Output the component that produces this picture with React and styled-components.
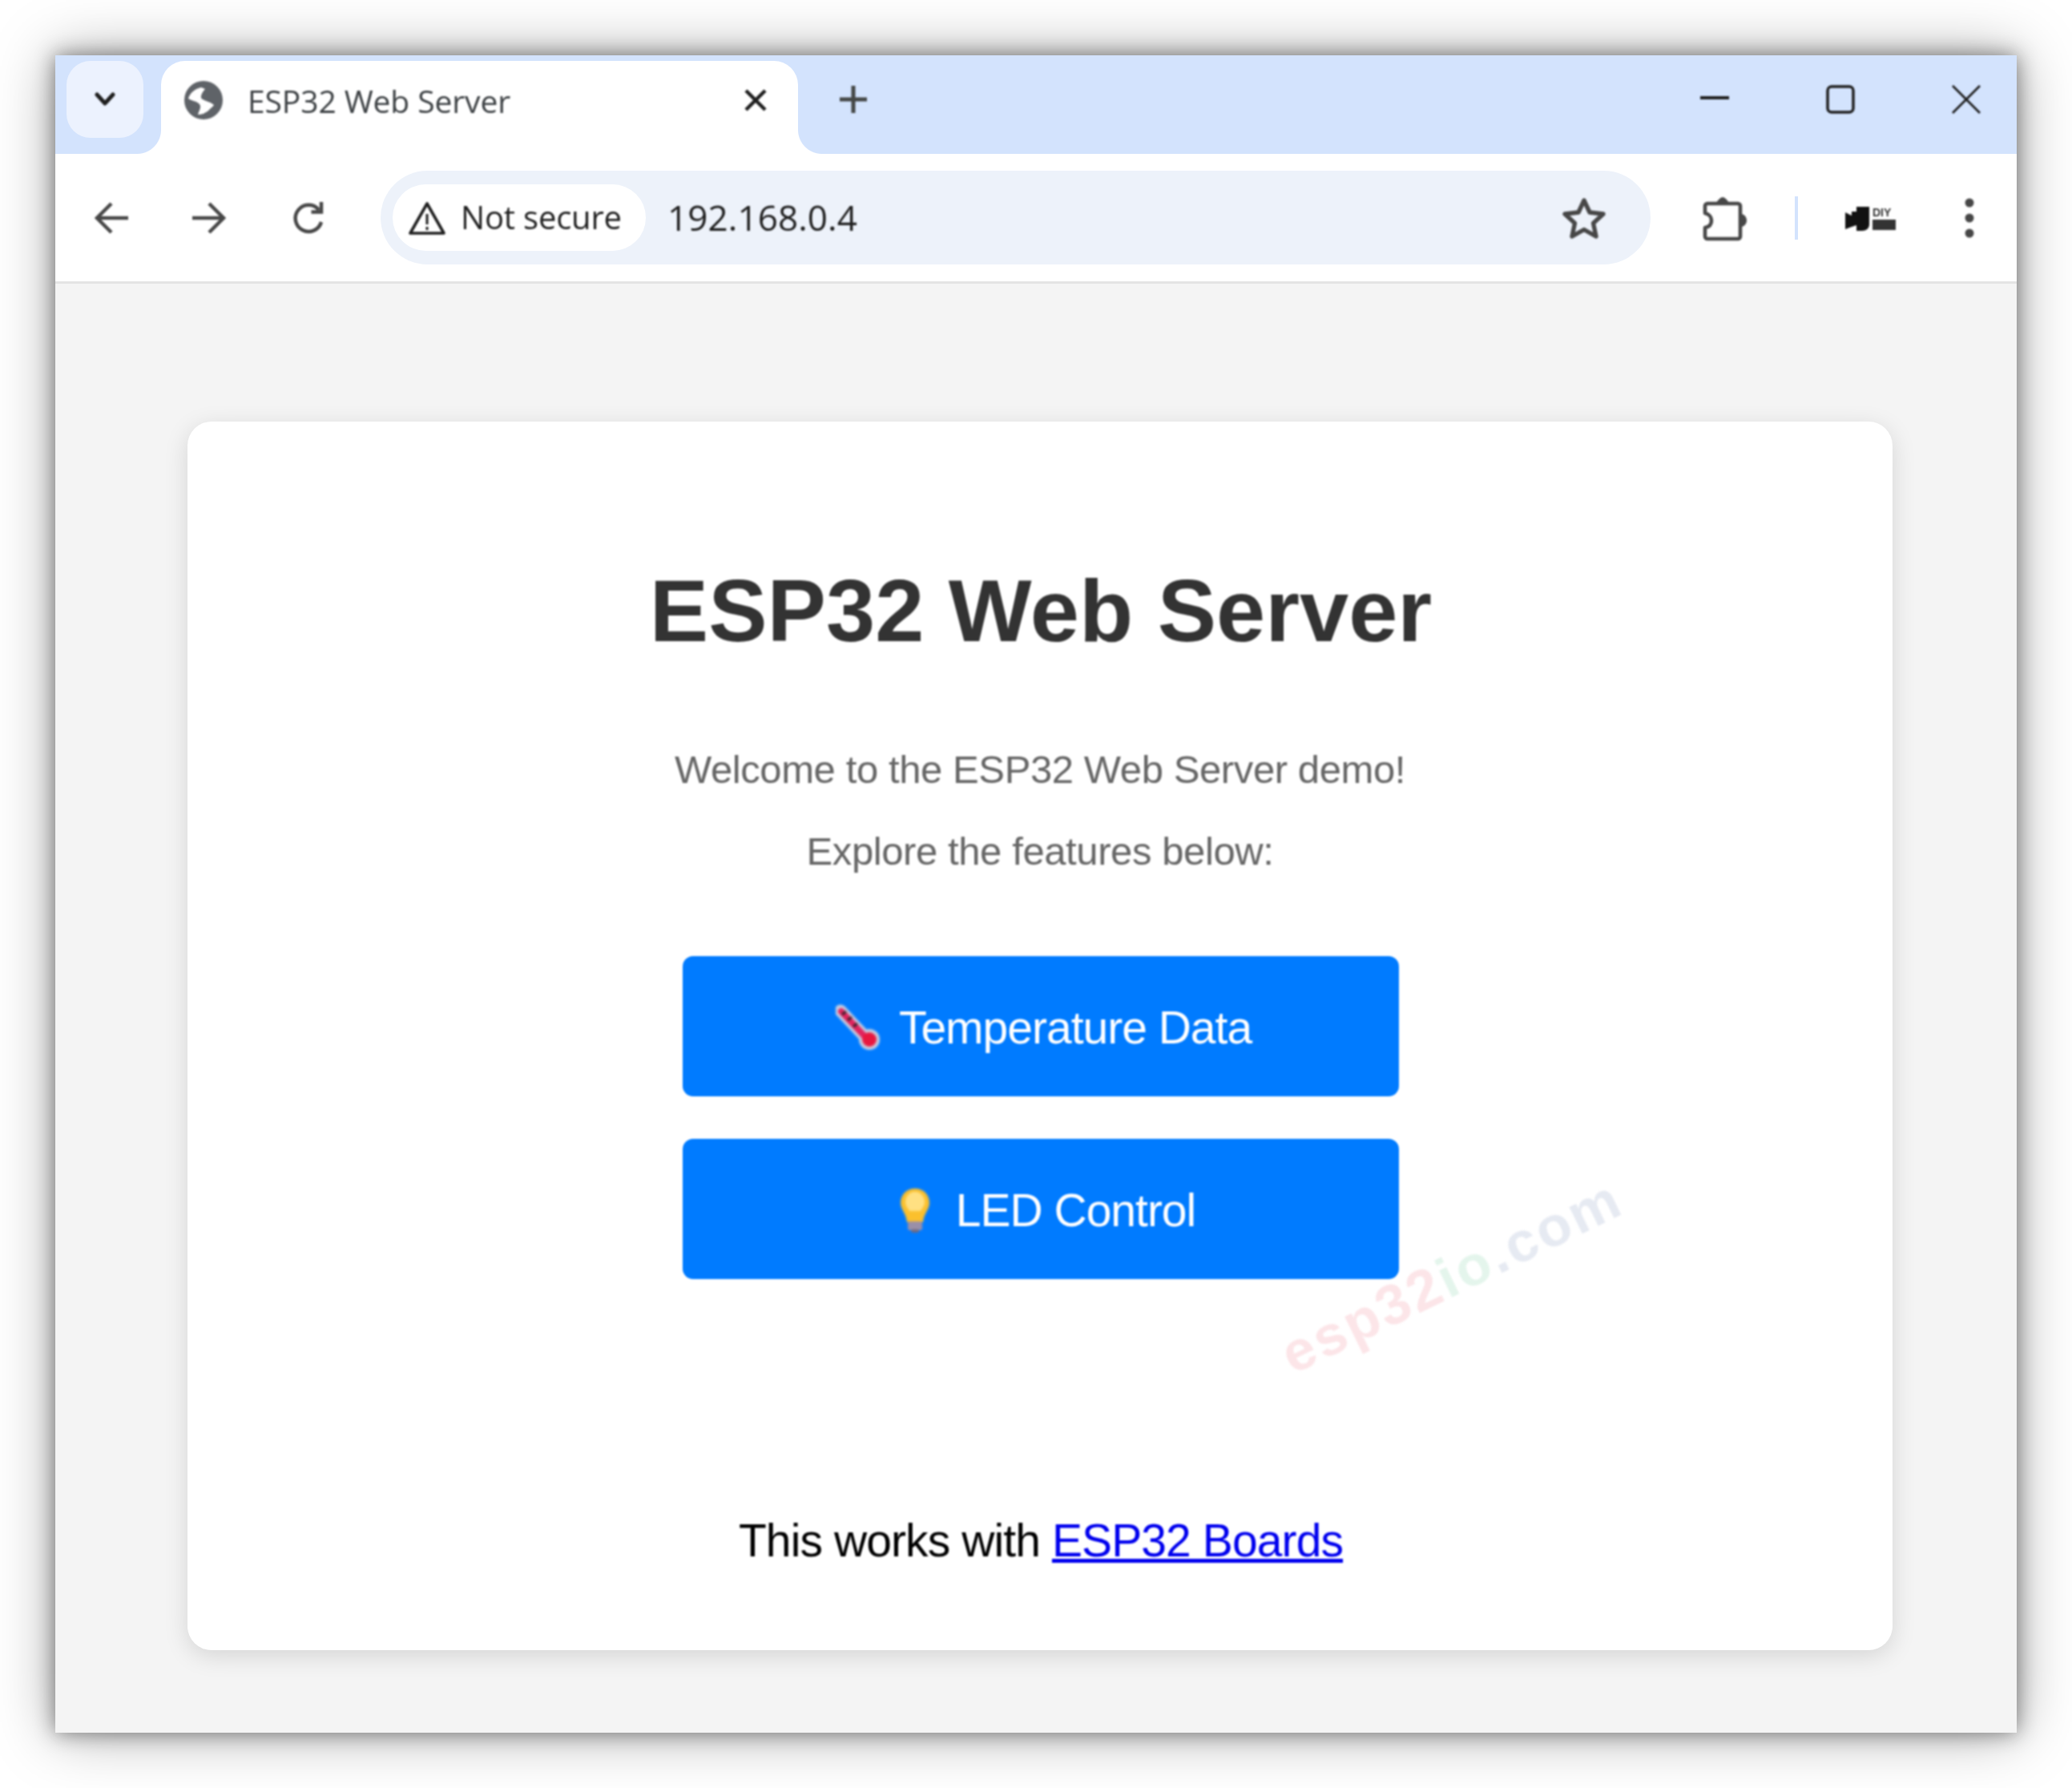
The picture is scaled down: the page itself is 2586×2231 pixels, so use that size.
import React from 'react';
import styled, { createGlobalStyle, css } from 'styled-components';

const GlobalStyle = createGlobalStyle`
  html, body {
    margin: 0;
    padding: 0;
    background: #fff;
  }
  * {
    box-sizing: border-box;
  }
`;

// the reference is an upscaled capture, everything in it is a bit soft
const soft = css`
  filter: blur(0.8px);
`;

const Page = styled.div`
  width: 2586px;
  height: 2231px;
  padding: 69px;
  overflow: hidden;
`;

const BrowserWindow = styled.div`
  width: 2448px;
  height: 2093px;
  display: flex;
  flex-direction: column;
  background: #f4f4f4;
  box-shadow: 0 0 24px rgba(0, 0, 0, 0.45), 0 0 70px rgba(0, 0, 0, 0.35);
`;

const TabStrip = styled.div`
  height: 123px;
  flex: none;
  display: flex;
  align-items: flex-start;
  padding: 7px 0 0 14px;
  background: #d3e3fd;
`;

const TabSearch = styled.div`
  width: 96px;
  height: 96px;
  flex: none;
  display: flex;
  align-items: center;
  justify-content: center;
  border-radius: 30px;
  background: #ecf2fe;
`;

const Tab = styled.div`
  position: relative;
  width: 795px;
  height: 116px;
  flex: none;
  margin-left: 22px;
  padding: 0 38px 18px 28px;
  display: flex;
  align-items: center;
  background: #fff;
  border-radius: 30px 30px 0 0;

  &::before,
  &::after {
    content: '';
    position: absolute;
    bottom: 0;
    width: 30px;
    height: 30px;
  }
  &::before {
    left: -30px;
    background: radial-gradient(circle at 0 0, transparent 29.5px, #fff 30.5px);
  }
  &::after {
    right: -30px;
    background: radial-gradient(circle at 100% 0, transparent 29.5px, #fff 30.5px);
  }
`;

const TabTitle = styled.span`
  ${soft}
  flex: 1;
  margin-left: 30px;
  font-family: 'Open Sans', sans-serif;
  font-size: 39px;
  letter-spacing: -0.1px;
  color: #3c4043;
  white-space: nowrap;
`;

const NewTab = styled.div`
  width: 60px;
  height: 60px;
  flex: none;
  margin: 18px 0 0 39px;
  display: flex;
  align-items: center;
  justify-content: center;
`;

const WindowControls = styled.div`
  margin: 18px 0 0 auto;
  display: flex;
  align-items: center;
  gap: 97px;
  padding-right: 33px;
`;

const ControlSlot = styled.div`
  width: 60px;
  height: 60px;
  display: flex;
  align-items: center;
  justify-content: center;
`;

const Toolbar = styled.div`
  height: 162px;
  flex: none;
  display: flex;
  align-items: center;
  padding-left: 28px;
  background: #fff;
  border-bottom: 3px solid #e4e4e4;
`;

const NavButton = styled.div`
  width: 84px;
  height: 84px;
  flex: none;
  margin-right: ${({ $gap }) => $gap}px;
  display: flex;
  align-items: center;
  justify-content: center;
`;

const AddressBar = styled.div`
  width: 1585px;
  height: 117px;
  flex: none;
  display: flex;
  align-items: center;
  padding: 0 56px 0 15px;
  border-radius: 59px;
  background: #edf2fa;
`;

const SecurityChip = styled.div`
  width: 316px;
  height: 83px;
  flex: none;
  display: flex;
  align-items: center;
  gap: 18px;
  padding-left: 19px;
  border-radius: 42px;
  background: #fff;
  font-family: 'Open Sans', sans-serif;
  font-size: 40px;
  letter-spacing: -0.2px;
  color: #1f1f1f;
  white-space: nowrap;
`;

const ChipLabel = styled.span`
  ${soft}
  margin-bottom: 2px;
`;

const UrlText = styled.span`
  ${soft}
  flex: 1;
  margin: 0 0 2px 27px;
  font-family: 'Open Sans', sans-serif;
  font-size: 44px;
  letter-spacing: 0.1px;
  color: #1f1f1f;
`;

const ToolbarEnd = styled.div`
  flex: 1;
  display: flex;
  align-items: center;
`;

const ToolSlot = styled.div`
  width: ${({ $w }) => $w}px;
  height: 70px;
  flex: none;
  margin-left: ${({ $left }) => $left}px;
  display: flex;
  align-items: center;
  justify-content: center;
`;

const Divider = styled.div`
  width: 4px;
  height: 54px;
  flex: none;
  margin-left: ${({ $left }) => $left}px;
  background: #d3e3fd;
`;

const Body = styled.div`
  flex: 1;
  padding: 172px 155px 103px 165px;
`;

const Card = styled.div`
  position: relative;
  height: 1533px;
  padding-top: 176px;
  display: flex;
  flex-direction: column;
  align-items: center;
  background: #fff;
  border-radius: 30px;
  box-shadow: 0 7px 30px rgba(0, 0, 0, 0.13);
  font-family: 'Liberation Sans', Arial, sans-serif;
`;

const Title = styled.h1`
  ${soft}
  margin: 0 0 108px 2px;
  font-size: 110px;
  line-height: 120px;
  font-weight: 700;
  color: #333;
`;

const Intro = styled.p`
  ${soft}
  margin: 0 0 42px;
  font-size: 49px;
  line-height: 60px;
  letter-spacing: -0.4px;
  color: #666;
`;

const ActionButton = styled.a`
  ${soft}
  width: 894px;
  height: 175px;
  flex: none;
  margin: ${({ $top }) => $top}px 0 0 2px;
  padding: 3px 0 0 ${({ $shift }) => $shift}px;
  display: flex;
  align-items: center;
  justify-content: center;
  gap: ${({ $gap }) => $gap}px;
  border-radius: 13px;
  background: #007bff;
  color: #fff;
  font-size: 57px;
  letter-spacing: -1px;
`;

const Footer = styled.p`
  ${soft}
  margin: 294px 0 0 2px;
  font-size: 57px;
  line-height: 64px;
  letter-spacing: -0.9px;
  color: #000;
`;

const BoardLink = styled.a`
  color: #0000ee;
  text-decoration: underline;
`;

const Watermark = styled.div`
  ${soft}
  position: absolute;
  left: 1577px;
  top: 1066px;
  transform: translate(-50%, -50%) rotate(-26deg);
  font-size: 71px;
  font-weight: 700;
  letter-spacing: 3px;
  white-space: nowrap;
`;

const WatermarkPart = styled.span`
  color: ${({ $color }) => $color};
`;

const Glyph = styled.svg`
  ${soft}
  display: block;
  flex: none;
`;

const Chevron = () => (
  <Glyph width="28" height="20" viewBox="0 0 28 20" fill="none" stroke="#1f1f1f" strokeWidth="5" strokeLinecap="round" strokeLinejoin="round">
    <path d="M4 4l10 11L24 4" />
  </Glyph>
);

const GlobeIcon = () => (
  <Glyph width="50" height="50" viewBox="0 0 50 50">
    <circle cx="25" cy="25" r="24" fill="#5f6368" />
    <path d="M22 9C14 11 8 16 6 23c4 3 11 3 14 7 3 4-1 8-2 13 6 0 12-3 15-7 2-2 4-3 5-5-4-4-9-4-14-7-4-2-2-7 3-13z" fill="#fff" />
  </Glyph>
);

const CloseTab = () => (
  <Glyph width="30" height="30" viewBox="0 0 30 30" stroke="#1f1f1f" strokeWidth="4.5">
    <path d="M3 3l24 24M27 3L3 27" />
  </Glyph>
);

const Plus = () => (
  <Glyph width="38" height="38" viewBox="0 0 38 38" stroke="#444746" strokeWidth="5">
    <path d="M19 2v34M2 19h34" />
  </Glyph>
);

const Minimize = () => (
  <Glyph width="36" height="8" viewBox="0 0 36 8" stroke="#1f1f1f" strokeWidth="4">
    <path d="M0 2h36" />
  </Glyph>
);

const Maximize = () => (
  <Glyph width="36" height="36" viewBox="0 0 36 36" fill="none" stroke="#1f1f1f" strokeWidth="3.5">
    <rect x="2" y="2" width="32" height="32" rx="5" />
  </Glyph>
);

const CloseWindow = () => (
  <Glyph width="38" height="38" viewBox="0 0 38 38" stroke="#1f1f1f" strokeWidth="2.8">
    <path d="M2 2l34 34M36 2L2 36" />
  </Glyph>
);

const ArrowIcon = ({ flip }) => (
  <Glyph width="44" height="42" viewBox="0 0 44 42" fill="none" stroke="#474747" strokeWidth="4.5" style={flip ? { transform: 'scaleX(-1)' } : undefined}>
    <path d="M43 21H4M22 3L4 21l18 18" />
  </Glyph>
);

const ReloadIcon = () => (
  <Glyph width="44" height="44" viewBox="0 0 44 44" fill="none" stroke="#474747" strokeWidth="4.5">
    <path d="M37 27a16.500 16.500 0 1 1-3-15" />
    <path d="M37 2v12.500H24.500" />
  </Glyph>
);

const WarningIcon = () => (
  <Glyph width="48" height="44" viewBox="0 0 48 44" fill="none" stroke="#1f1f1f" strokeWidth="3.6" strokeLinejoin="round">
    <path d="M24 4L3 41h42z" />
    <path d="M24 17v13M24 33v4" strokeWidth="3" />
  </Glyph>
);

const StarIcon = () => (
  <Glyph width="54" height="52" viewBox="0 0 54 52" fill="none" stroke="#474747" strokeWidth="5.4" strokeLinejoin="round">
    <path d="M27 4l7 15 17 2-12.500 11.500L42 49l-15-8.500L12 49l3.500-16.500L3 21l17-2z" />
  </Glyph>
);

const PuzzleIcon = () => (
  <Glyph width="60" height="60" viewBox="0 0 60 60">
    <path d="M10 12h38a3 3 0 0 1 3 3v38a3 3 0 0 1-3 3H10a3 3 0 0 1-3-3V42c6-1 8-5 8-9 0-4-3-8-8-9V15a3 3 0 0 1 3-3z" fill="none" stroke="#474747" strokeWidth="4.6" strokeLinejoin="round" />
    <path d="M21 11c2-3 5-7 8-7s6 4 8 7zM52 25c4 0 7 4 7 8s-3 8-7 8z" fill="#474747" />
  </Glyph>
);

const ProfileLogo = () => (
  <Glyph width="66" height="34" viewBox="0 0 66 34">
    <path d="M2 10l8 4V9h6V3h16v22c0 5-4 8-9 8h-7v-7l-6 2-8 3z" fill="#111" />
    <text x="36" y="15" fontFamily="Liberation Sans, sans-serif" fontSize="14" fontWeight="700" fill="#333">DIY</text>
    <rect x="36" y="19" width="29" height="13" fill="#333" />
  </Glyph>
);

const MenuDots = () => (
  <Glyph width="14" height="52" viewBox="0 0 14 52" fill="#474747">
    <circle cx="7" cy="7" r="5.500" />
    <circle cx="7" cy="26" r="5.500" />
    <circle cx="7" cy="45" r="5.500" />
  </Glyph>
);

const ThermometerIcon = () => (
  <Glyph width="58" height="58" viewBox="0 0 58 58">
    <path d="M6 8L36 40" stroke="#c9cfe0" strokeWidth="15" strokeLinecap="round" />
    <circle cx="42" cy="44" r="13" fill="#c9cfe0" />
    <path d="M7 9L37 41" stroke="#e0245e" strokeWidth="8" strokeLinecap="round" />
    <circle cx="42" cy="44" r="9" fill="#e8173f" />
    <path d="M13 9l-5 4M20 16l-5 4M27 24l-5 4" stroke="#33202b" strokeWidth="3" />
  </Glyph>
);

const BulbIcon = () => (
  <Glyph width="40" height="56" viewBox="0 0 40 56">
    <path d="M20 1C9 1 2 9 2 19c0 8 7 13 8 24h20c1-11 8-16 8-24C38 9 31 1 20 1z" fill="#fbc02d" />
    <path d="M20 5c-7 0-12 6-12 13 0 4 3 8 5 11h14c2-3 5-7 5-11 0-7-5-13-12-13z" fill="#ffe082" />
    <rect x="11" y="42" width="18" height="11" rx="2" fill="#9a8fa8" />
    <rect x="15" y="52" width="10" height="4" rx="2" fill="#6f6a80" />
  </Glyph>
);

const App = () => (
  <Page>
    <GlobalStyle />
    <BrowserWindow>
      <TabStrip>
        <TabSearch>
          <Chevron />
        </TabSearch>
        <Tab>
          <GlobeIcon />
          <TabTitle>ESP32 Web Server</TabTitle>
          <CloseTab />
        </Tab>
        <NewTab>
          <Plus />
        </NewTab>
        <WindowControls>
          <ControlSlot>
            <Minimize />
          </ControlSlot>
          <ControlSlot>
            <Maximize />
          </ControlSlot>
          <ControlSlot>
            <CloseWindow />
          </ControlSlot>
        </WindowControls>
      </TabStrip>
      <Toolbar>
        <NavButton $gap={38}>
          <ArrowIcon />
        </NavButton>
        <NavButton $gap={41}>
          <ArrowIcon flip />
        </NavButton>
        <NavButton $gap={47}>
          <ReloadIcon />
        </NavButton>
        <AddressBar>
          <SecurityChip>
            <WarningIcon />
            <ChipLabel>Not secure</ChipLabel>
          </SecurityChip>
          <UrlText>192.168.0.4</UrlText>
          <StarIcon />
        </AddressBar>
        <ToolbarEnd>
          <ToolSlot $w={60} $left={61}>
            <PuzzleIcon />
          </ToolSlot>
          <Divider $left={59} />
          <ToolSlot $w={66} $left={57}>
            <ProfileLogo />
          </ToolSlot>
          <ToolSlot $w={14} $left={84}>
            <MenuDots />
          </ToolSlot>
        </ToolbarEnd>
      </Toolbar>
      <Body>
        <Card>
          <Title>ESP32 Web Server</Title>
          <Intro>Welcome to the ESP32 Web Server demo!</Intro>
          <Intro>Explore the features below:</Intro>
          <ActionButton $top={59} $gap={21} $shift={7}>
            <ThermometerIcon />
            Temperature Data
          </ActionButton>
          <ActionButton $top={53} $gap={31} $shift={16}>
            <BulbIcon />
            LED Control
          </ActionButton>
          <Footer>
            This works with <BoardLink>ESP32 Boards</BoardLink>
          </Footer>
          <Watermark>
            <WatermarkPart $color="#fce5e8">esp32</WatermarkPart>
            <WatermarkPart $color="#e4f5ec">io</WatermarkPart>
            <WatermarkPart $color="#e6eaf2">.com</WatermarkPart>
          </Watermark>
        </Card>
      </Body>
    </BrowserWindow>
  </Page>
);

export default App;
